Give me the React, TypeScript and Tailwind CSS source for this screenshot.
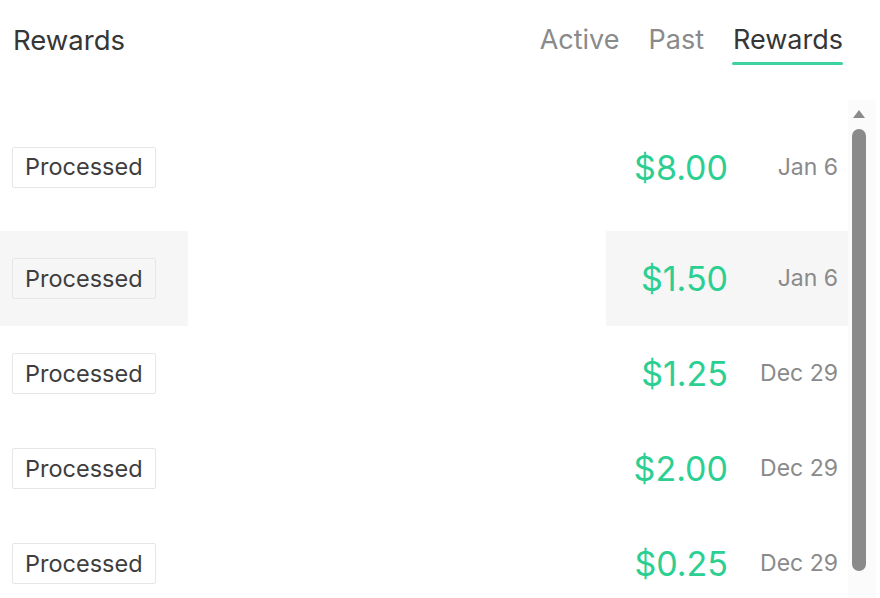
const rows = [
  { amount: "$8.00", date: "Jan 6", hover: false },
  { amount: "$1.50", date: "Jan 6", hover: true },
  { amount: "$1.25", date: "Dec 29", hover: false },
  { amount: "$2.00", date: "Dec 29", hover: false },
  { amount: "$0.25", date: "Dec 29", hover: false },
];

export default function App() {
  return (
    <div className="w-[880px] h-[598px] overflow-hidden bg-white font-['Inter','Liberation_Sans',sans-serif]">
      {/* header */}
      <div className="flex items-start justify-between h-[100px] pl-[13px] pr-[37px]">
        <h1 className="mt-[22px] text-[27.5px] leading-[36px] text-[#363636]">Rewards</h1>
        <div className="flex gap-[29px] mt-[22px]">
          <span className="text-[27px] leading-[36px] text-[#8a8a8a]">Active</span>
          <span className="text-[27px] leading-[36px] text-[#8a8a8a]">Past</span>
          <span className="relative text-[27px] leading-[36px] text-[#363636]">
            Rewards
            <span className="absolute left-[-1px] right-0 top-[40px] h-[3px] rounded-full bg-[#3dd3a0]" />
          </span>
        </div>
      </div>

      {/* list + scrollbar */}
      <div className="flex h-[498px]">
        <div className="w-[848px] pt-[20px]">
          {rows.map((r, i) => (
            <div key={i} className={`flex ${i === 0 ? "h-[94px] mb-[17px]" : "h-[95px]"}`}>
              <div className={`w-[188px] flex items-center pl-[12px] ${r.hover ? "bg-[#f6f6f6]" : ""}`}>
                <span className="h-[41px] px-[12px] flex items-center border border-[#e6e6e6] rounded-[2px] text-[23.5px] text-[#3e3e3e]">
                  Processed
                </span>
              </div>
              <div className="flex-1" />
              <div className={`w-[152px] flex items-center justify-end pr-[30px] ${r.hover ? "bg-[#f6f6f6]" : ""}`}>
                <span className="text-[34px] text-[#2ccf92]">{r.amount}</span>
              </div>
              <div className={`w-[90px] flex items-center justify-end pr-[10px] ${r.hover ? "bg-[#f6f6f6]" : ""}`}>
                <span className="text-[23px] text-[#8a8a8a]">{r.date}</span>
              </div>
            </div>
          ))}
        </div>
        <div className="w-[28px] bg-[#fbfbfb] flex flex-col items-center">
          <svg width="12" height="8" viewBox="0 0 12 8" className="mt-[10px] mr-[6px]">
            <polygon points="6,0 12,8 0,8" fill="#8a8a8a" />
          </svg>
          <div className="mt-[11px] mr-[6px] w-[14px] h-[442px] rounded-full bg-[#8a8a8a]" />
        </div>
      </div>
    </div>
  );
}
